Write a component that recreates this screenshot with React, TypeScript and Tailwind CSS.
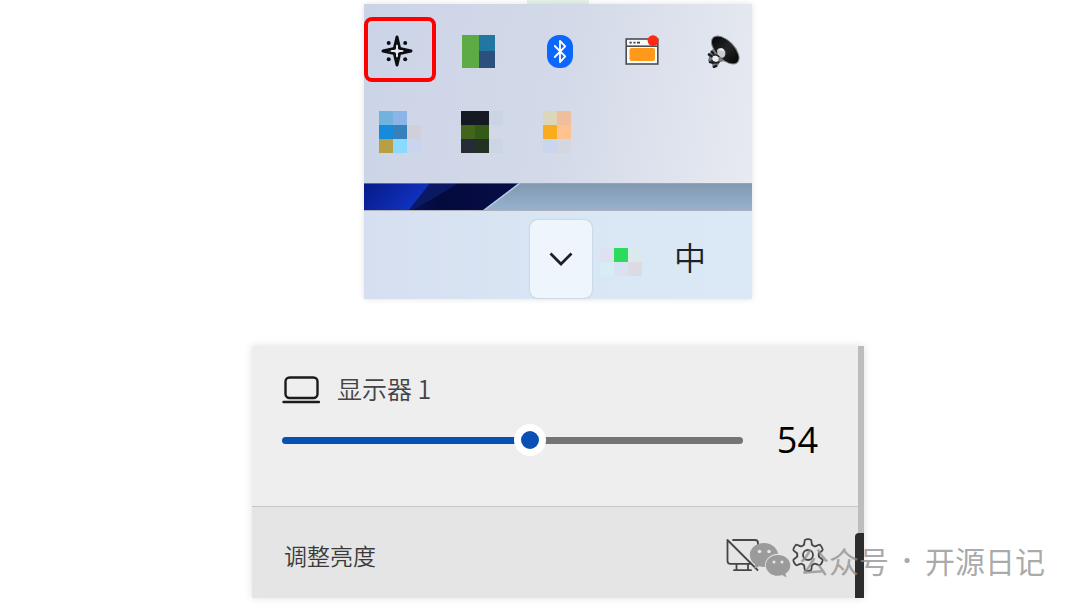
import { useState } from "react"

const CELL = 14

// [column, row, colour]
type Cell = [number, number, string]

const mosaics: { name: string; cells: Cell[] }[] = [
  {
    name: "Cloud app",
    cells: [
      [0, 0, "#72b3de"],
      [1, 0, "#8ab5e6"],
      [0, 1, "#168adb"],
      [1, 1, "#3681bb"],
      [2, 1, "#d0cfdb"],
      [0, 2, "#b89f45"],
      [1, 2, "#8bdafe"],
      [2, 2, "#c9d5ec"],
    ],
  },
  {
    name: "Graphics app",
    cells: [
      [0, 0, "#151922"],
      [1, 0, "#151922"],
      [2, 0, "#cad4e2"],
      [0, 1, "#41661b"],
      [1, 1, "#335b17"],
      [0, 2, "#272b36"],
      [1, 2, "#233024"],
      [2, 2, "#ccd6e3"],
    ],
  },
  {
    name: "Notes app",
    cells: [
      [0, 0, "#dbd7bb"],
      [1, 0, "#f1be9c"],
      [0, 1, "#f9ac1d"],
      [1, 1, "#fec391"],
      [0, 2, "#cad6ee"],
      [1, 2, "#d5d7e0"],
    ],
  },
]

const statusCells: Cell[] = [
  [0, 1, "#dfe1f3"],
  [1, 1, "#2bdb5d"],
  [2, 1, "#dae9ec"],
  [0, 2, "#d5edf3"],
  [1, 2, "#d8e2f2"],
  [2, 2, "#dcdbe3"],
]

function Mosaic({ cells }: { cells: Cell[] }) {
  return (
    <svg width="42" height="42" viewBox="0 0 42 42" shapeRendering="crispEdges" aria-hidden="true">
      {cells.map(([col, row, fill]) => (
        <rect key={`${col}-${row}`} x={col * CELL} y={row * CELL} width={CELL} height={CELL} fill={fill} />
      ))}
    </svg>
  )
}

function BrightnessIcon() {
  return (
    <svg width="34" height="34" viewBox="0 0 34 34" aria-hidden="true">
      <path
        d="M17 3 19.6 14.4 31 17 19.6 19.6 17 31 14.4 19.6 3 17 14.4 14.4Z"
        fill="#e3e7f1"
        stroke="#0c0d10"
        strokeWidth="3"
        strokeLinejoin="round"
      />
      <path d="M17 12v10M12 17h10" stroke="#e3e7f1" strokeWidth="2" strokeLinecap="round" />
      <g fill="#0c0d10">
        <circle cx="8.7" cy="8.9" r="2" />
        <circle cx="25.2" cy="8.9" r="2" />
        <circle cx="8.7" cy="25.2" r="2" />
        <circle cx="25.2" cy="25.2" r="2" />
      </g>
    </svg>
  )
}

function TilesIcon() {
  return (
    <svg width="34" height="34" viewBox="0 0 34 34" aria-hidden="true">
      <path d="M0 1h17v33H0z" fill="#5cab44" />
      <path d="M17 1h16v16H17z" fill="#2177a1" />
      <path d="M17 17h16v17H17z" fill="#2b507d" />
    </svg>
  )
}

function BluetoothIcon() {
  return (
    <svg width="34" height="34" viewBox="0 0 34 34" aria-hidden="true">
      <rect x="4" y="1" width="26" height="33" rx="12" fill="#0c68fc" />
      <path
        d="m11.8 12 10.4 10.4-5.2 5.8V6.8l5.2 5.6L11.8 23"
        fill="none"
        stroke="#fff"
        strokeWidth="1.8"
        strokeLinejoin="round"
        strokeLinecap="round"
      />
    </svg>
  )
}

function WindowIcon() {
  return (
    <svg width="34" height="34" viewBox="0 0 34 34" aria-hidden="true">
      <rect x="1.2" y="5" width="31.6" height="25" fill="#f8fafc" stroke="#4b4d50" strokeWidth="1.6" />
      <path d="M1.7 12.2h31" stroke="#4b4d50" strokeWidth="1.6" />
      <path d="M4.5 8.6h2.2M8.5 8.6h2M12 8.6h3" stroke="#3d3f42" strokeWidth="1.8" />
      <rect x="4.5" y="14" width="25.5" height="13" rx="2" fill="#ff991c" />
      <circle cx="28" cy="6.6" r="5.4" fill="#fb2b12" />
    </svg>
  )
}

function SpeakerIcon() {
  return (
    <svg width="34" height="34" viewBox="0 0 34 34" aria-hidden="true">
      <defs>
        <linearGradient id="cone" x1="0" y1="0" x2="1" y2="0">
          <stop offset="0" stopColor="#08080a" />
          <stop offset="0.5" stopColor="#242527" />
          <stop offset="1" stopColor="#050506" />
        </linearGradient>
      </defs>
      <path d="M5 18 8 13l11 14-5 1-3 5-4 1-1-4-4-3 1-4-1-3Z" fill="#73767a" />
      <path d="M2 20l5 3M3 28l5 1M7 33.5l4-2M5 17l3 3" stroke="#17181a" strokeWidth="2.2" />
      <ellipse cx="19.3" cy="16" rx="17.4" ry="9.2" transform="rotate(46 19.3 16)" fill="url(#cone)" stroke="#85888c" strokeWidth="1" />
      <path d="M11.500 20.500 11 16c1.500-2.400 5-2.700 7-.5 2 2.200 2 5.500-.2 7.900l-2.500.3Z" fill="#c9cbce" />
      <path d="M13.500 16c1.500-1 3.200-.5 4 1" fill="none" stroke="#f2f3f4" strokeWidth="1.600" />
      <circle cx="9.5" cy="24.5" r="3.2" fill="#eceef0" />
      <path d="M5.500 26c1 2.500 4.500 3.800 8 2M7 21.500c2-1.500 5-.5 6 1.500" fill="none" stroke="#222426" strokeWidth="1.600" />
    </svg>
  )
}

function LaptopIcon() {
  return (
    <svg width="38" height="28" viewBox="0 0 38 28" aria-hidden="true" fill="none" stroke="#1b1b1b">
      <rect x="3.5" y="1.5" width="32" height="20.5" rx="4" strokeWidth="2.4" />
      <path d="M1.5 26h35.5" strokeWidth="2.4" strokeLinecap="round" />
    </svg>
  )
}

function DisplayOffIcon() {
  return (
    <svg width="34" height="34" viewBox="0 0 34 34" aria-hidden="true" fill="none" stroke="#464646" strokeWidth="1.8" strokeLinecap="round">
      <path d="M7 2h22c2 0 3 1 3 3v18c0 1.5-.6 2.4-1.6 2.8M1.500 2v21c0 1.800 1 2.800 2.800 2.800H25M1.500 2l30 30" />
      <path d="M10.500 26v6M22 26v6M8 32.200h17" />
    </svg>
  )
}

const TEETH = 6

function gearPoint(radius: number, degrees: number) {
  const angle = ((degrees - 90) * Math.PI) / 180
  return `${(18 + radius * Math.cos(angle)).toFixed(2)} ${(18 + radius * Math.sin(angle)).toFixed(2)}`
}

// Walks the teeth clockwise from the top, rounding every corner
function gearPath() {
  let d = `M${gearPoint(12.5, -17)}`
  for (let i = 0; i < TEETH; i++) {
    const a = (i * 360) / TEETH
    d += ` L${gearPoint(14.4, -14 + a)} Q${gearPoint(15.9, -12 + a)} ${gearPoint(15.8, -7 + a)}`
    d += ` Q${gearPoint(16, a)} ${gearPoint(15.8, 7 + a)} Q${gearPoint(15.9, 12 + a)} ${gearPoint(14.4, 14 + a)}`
    d += ` L${gearPoint(12.5, 17 + a)} Q${gearPoint(10.2, 21 + a)} ${gearPoint(10.9, 30 + a)}`
    d += ` Q${gearPoint(10.2, 39 + a)} ${gearPoint(12.5, 43 + a)}`
  }
  return `${d}Z`
}

function GearIcon() {
  return (
    <svg width="36" height="36" viewBox="0 0 36 36" aria-hidden="true" fill="none" stroke="#464646" strokeWidth="1.8" strokeLinejoin="round">
      <path d={gearPath()} />
      <circle cx="18" cy="18" r="5" />
    </svg>
  )
}

function WeChatIcon() {
  return (
    <svg width="42" height="36" viewBox="0 0 42 36" aria-hidden="true">
      <path d="M15 1C7 1 .8 6.3.8 13c0 4 2.2 7.3 5.5 9.500L5 27l5.200-2.700c1.700.4 3.400.6 5 .6h1C15 18 21 12 29.200 11.700 27.800 5.500 22 1 15 1Z" fill="#9b9b9b" />
      <path d="M29 13c-6.800 0-12.200 4.600-12.200 10.400S22.200 33.800 29 33.800c1.500 0 3-.3 4.300-.7l4.200 2.300-1.100-3.800c3-1.900 4.900-4.800 4.900-8.200C41.300 17.600 35.800 13 29 13Z" fill="#9b9b9b" />
      <g fill="#e6e6e6">
        <circle cx="10.5" cy="9.5" r="1.8" />
        <circle cx="20" cy="9.5" r="1.8" />
        <circle cx="25" cy="20" r="1.5" />
        <circle cx="33" cy="20" r="1.5" />
      </g>
    </svg>
  )
}

const trayIcons = [
  { name: "Tiles", icon: <TilesIcon /> },
  { name: "Bluetooth", icon: <BluetoothIcon /> },
  { name: "Window", icon: <WindowIcon /> },
  { name: "Speaker", icon: <SpeakerIcon /> },
]

function Wallpaper() {
  return (
    <svg className="block h-7 w-full" viewBox="0 0 388 28" preserveAspectRatio="none" aria-hidden="true">
      <defs>
        <linearGradient id="sky" x1="0" y1="0" x2="0" y2="1">
          <stop offset="0" stopColor="#8298b1" />
          <stop offset="1" stopColor="#98b2ce" />
        </linearGradient>
        <linearGradient id="petal" x1="0" y1="0" x2="1" y2="0.4">
          <stop offset="0" stopColor="#061b87" />
          <stop offset="1" stopColor="#1233c4" />
        </linearGradient>
        <linearGradient id="shade" x1="0" y1="0" x2="1" y2="0">
          <stop offset="0" stopColor="#0b1a72" />
          <stop offset="0.5" stopColor="#040a3c" />
          <stop offset="1" stopColor="#070e48" />
        </linearGradient>
      </defs>
      <path d="M0 0h388v28H0z" fill="url(#sky)" />
      <path d="M0 0h155l-37 28H0z" fill="url(#shade)" />
      <path d="M95 0 48 28h-6L66 0z" fill="#0b1862" />
      <path d="M0 0h66L44 28H0z" fill="url(#petal)" />
      <path d="m156 0-37 28" stroke="#b7c8e6" strokeWidth="1.5" />
      <path d="M0 .5h388" stroke="#a5adbd" strokeOpacity="0.5" />
      <path d="M0 27.5h388" stroke="#adb0b8" />
    </svg>
  )
}

function TrayCard() {
  return (
    <section className="w-full max-w-[388px] shadow-[0_0_6px_rgba(0,0,0,0.12)]">
      <div className="flex flex-col gap-[43px] bg-linear-100 from-[#cbd4e7] via-[#d3d9e8] to-[#e7eaf1] pt-[30px] pb-[30px]">
        <div className="flex items-center justify-between pr-3 pl-4">
          <button type="button" aria-label="Brightness" className="relative">
            <BrightnessIcon />
            <span className="absolute -top-[17px] -right-[22px] -bottom-[14px] -left-4 rounded-lg border-4 border-[#fe0000]" />
          </button>
          {trayIcons.map((item) => (
            <button key={item.name} type="button" aria-label={item.name}>
              {item.icon}
            </button>
          ))}
        </div>
        <div className="flex gap-10 pl-[15px]">
          {mosaics.map((item) => (
            <button key={item.name} type="button" aria-label={item.name}>
              <Mosaic cells={item.cells} />
            </button>
          ))}
        </div>
      </div>
      <Wallpaper />
      <div className="flex h-[88px] items-end justify-end bg-linear-to-r from-[#d6dff0] via-[#d9e6f4] to-[#dbe9f6] pr-[46px] pb-px">
        <button
          type="button"
          aria-label="Show hidden icons"
          className="mr-2 flex h-[78px] w-[62px] items-center justify-center rounded-lg bg-[#eff5fc] shadow-[0_0_2px_rgba(80,100,130,0.35)]"
        >
          <svg width="24" height="14" viewBox="0 0 24 14" aria-hidden="true">
            <path d="M1.5 1.5 12 12 22.5 1.5" fill="none" stroke="#1d1e20" strokeWidth="2.8" />
          </svg>
        </button>
        <div className="pb-[22px]">
          <Mosaic cells={statusCells} />
        </div>
        <button type="button" aria-label="中" className="ml-8 pb-[26px] text-[32px] leading-8 font-[350] text-[#1f2225]">
          中
        </button>
      </div>
    </section>
  )
}

function MonitorPanel() {
  const [level, setLevel] = useState(54)

  return (
    <section className="relative w-full max-w-[612px] bg-[#bdbdbd] pr-[6px] shadow-[0_0_8px_rgba(0,0,0,0.12)]">
      <div className="h-[161px] border-b border-[#c6c6c6] bg-[#eeeeee] pt-6 pr-10 pl-[30px]">
        <label htmlFor="level" className="flex h-10 items-center gap-[17px] text-[25px] leading-10 font-[350] text-[#444444]">
          <LaptopIcon />
          <span className="pb-1">显示器 1</span>
        </label>
        <div className="flex items-center justify-between gap-[34px]">
          <input
            id="level"
            type="range"
            min={0}
            max={100}
            value={level}
            onChange={(e) => setLevel(Number(e.target.value))}
            className="h-[7px] min-w-0 flex-1 appearance-none rounded-full [&::-webkit-slider-thumb]:size-8 [&::-webkit-slider-thumb]:appearance-none [&::-webkit-slider-thumb]:rounded-full [&::-webkit-slider-thumb]:border-[7px] [&::-webkit-slider-thumb]:border-white [&::-webkit-slider-thumb]:bg-[#0850b4]"
            style={{ background: `linear-gradient(to right, #0850b4 ${level}%, #747474 ${level}%)` }}
          />
          <output htmlFor="level" className="font-['Open_Sans'] text-[36px] leading-[60px] text-black">
            {level}
          </output>
        </div>
      </div>
      <div className="flex h-[91px] items-center justify-between bg-[#e5e5e5] pt-1 pr-8 pl-8">
        <span className="text-[23px] leading-8 font-[350] text-[#3a3a3a]">调整亮度</span>
        <div className="flex items-center gap-[30px]">
          <button type="button" aria-label="Turn off display">
            <DisplayOffIcon />
          </button>
          <button type="button" aria-label="Settings">
            <GearIcon />
          </button>
        </div>
      </div>
      <span className="absolute right-0 bottom-0 h-[65px] w-[9px] rounded-tl bg-[#2c2c2c]" />
    </section>
  )
}

export default function App() {
  return (
    <main className="relative flex min-h-screen flex-col items-center overflow-hidden bg-white pl-9 font-['Noto_Sans_CJK_SC',sans-serif]">
      <div className="h-1 w-[62px] bg-[#e4f3e8]" />
      <TrayCard />
      <div className="mt-[47px] flex w-full justify-center">
        <MonitorPanel />
      </div>
      <div className="absolute right-[35px] bottom-[26px] flex items-center text-[30px] leading-10 text-[#8e8e8e]/75">
        <WeChatIcon />
        <span className="ml-2">公众号</span>
        <span className="w-9 text-center font-['Open_Sans'] font-bold">·</span>
        <span>开源日记</span>
      </div>
    </main>
  )
}
